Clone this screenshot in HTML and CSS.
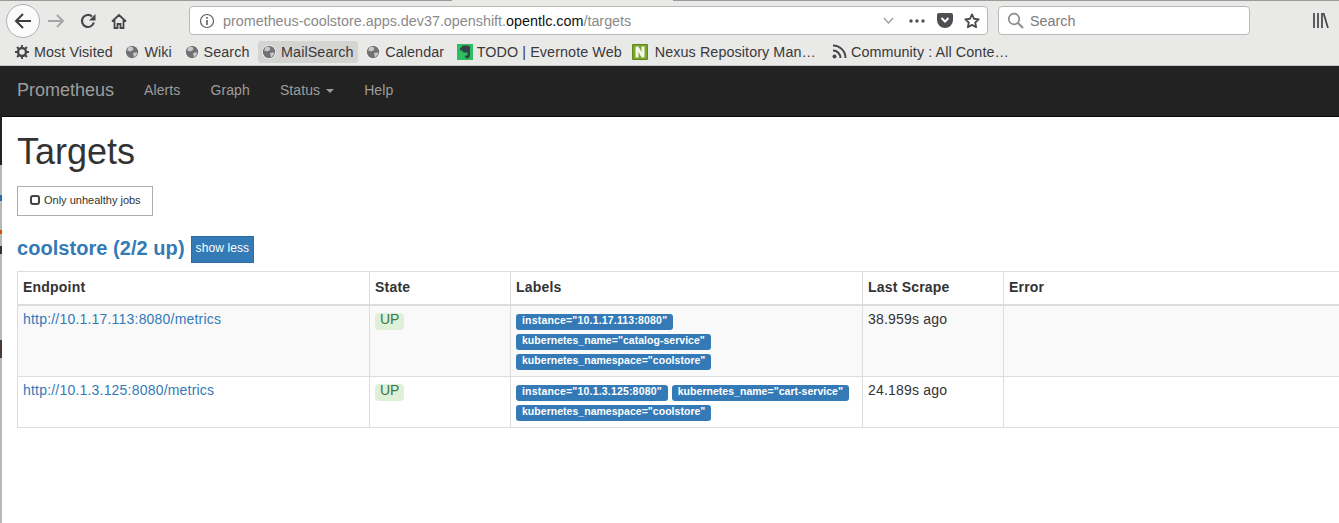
FILE: index.html
```html
<!DOCTYPE html>
<html>
<head>
    <meta charset="utf-8" />
    <title>Prometheus Time Series Collection and Processing Server</title>
    <link rel="stylesheet" href="styles.css">
</head>
<body>
    <div class="strip"></div>
    <div class="window">
        <div class="chrome">
            <div class="topline">
                <span class="topline-left"></span>
                <span class="topline-tab"></span>
                <span class="topline-right"></span>
            </div>
            <div class="toolbar">
                <div class="back">
                    <svg width="18" height="18" viewBox="0 0 18 18"><path d="M17 9H2M9 2L2 9l7 7" fill="none" stroke="#3d3d3f" stroke-width="2"/></svg>
                </div>
                <svg class="nav-icon forward" width="18" height="18" viewBox="0 0 18 18"><path d="M1 9h15M10 3l6 6-6 6" fill="none" stroke="#a5a5a5" stroke-width="1.8"/></svg>
                <svg class="nav-icon reload" width="16" height="16" viewBox="0 0 16 16"><path d="M13.8 9.5A6 6 0 1 1 12 3.5" fill="none" stroke="#45454a" stroke-width="2.2"/><path d="M15.500 1v6.500H9z" fill="#45454a"/></svg>
                <svg class="nav-icon home" width="16" height="16" viewBox="0 0 16 16"><path d="M1 8.500L8 2l7 6.500M3.500 7v8h3v-4h3v4h3V7" fill="none" stroke="#45454a" stroke-width="1.800"/></svg>
                <div class="urlbar">
                    <svg class="info" width="16" height="16" viewBox="0 0 16 16"><circle cx="8" cy="8" r="6.500" fill="none" stroke="#5f5f63" stroke-width="1.200"/><path d="M8 7v5M8 4v1.800" stroke="#5f5f63" stroke-width="1.600"/></svg>
                    <span class="url">prometheus-coolstore.apps.dev37.openshift.<b>opentlc.com</b>/targets</span>
                    <svg class="url-chevron" width="11" height="8" viewBox="0 0 11 8"><path d="M1 1l4.500 5L10 1" fill="none" stroke="#9a9a9c" stroke-width="1.200"/></svg>
                    <svg class="dots" width="16" height="4" viewBox="0 0 16 4"><circle cx="2" cy="2" r="1.700" fill="#4f4f53"/><circle cx="8" cy="2" r="1.700" fill="#4f4f53"/><circle cx="14" cy="2" r="1.700" fill="#4f4f53"/></svg>
                    <svg class="pocket" width="16" height="15" viewBox="0 0 16 15"><path d="M2 0h12a2 2 0 0 1 2 2v5a8 8 0 0 1-16 0V2a2 2 0 0 1 2-2z" fill="#4f4f53"/><path d="M4.500 5L8 8.500 11.500 5" fill="none" stroke="#fff" stroke-width="2"/></svg>
                    <svg class="star" width="16" height="16" viewBox="0 0 17 17"><path d="M8.500 1.500l2.100 4.600 5 .6-3.700 3.400 1 5-4.400-2.500-4.400 2.500 1-5L1.400 6.700l5-.6z" fill="none" stroke="#4a4a4e" stroke-width="1.900" stroke-linejoin="round"/></svg>
                </div>
                <div class="searchbar">
                    <svg width="17" height="17" viewBox="0 0 17 17"><circle cx="7" cy="7" r="5.300" fill="none" stroke="#8b8b8d" stroke-width="1.700"/><path d="M11 11l5 5" stroke="#8b8b8d" stroke-width="2"/></svg>
                    <span>Search</span>
                </div>
                <svg class="library" width="16" height="15" viewBox="0 0 16 15"><path d="M1 0v15M5 0v15M9 0v15M10.500 0l4.500 15" fill="none" stroke="#45454a" stroke-width="1.700"/></svg>
            </div>
            <div class="bookmarks">
                <div class="bookmark">
                    <svg width="14" height="14" viewBox="0 0 14 14"><circle cx="7" cy="7" r="4" fill="none" stroke="#45454a" stroke-width="2.400"/><path d="M7 0v3M7 11v3M0 7h3M11 7h3M2 2l2 2M10 10l2 2M12 2l-2 2M4 10l-2 2" stroke="#45454a" stroke-width="1.800"/></svg>
                    Most Visited
                </div>
                <div class="bookmark">
                    <svg class="globe" width="14" height="14" viewBox="0 0 14 14"><circle cx="7" cy="7" r="7" fill="#f6f6f6"/><circle cx="7" cy="7" r="6.200" fill="#727276"/><path d="M4 1.500l3.500.5 1 2.500-3 2-3.500-1zM8 8l3.500-.8.800 1.800L9 12.500z" fill="#c9c9c9"/></svg>
                    Wiki
                </div>
                <div class="bookmark">
                    <svg class="globe" width="14" height="14" viewBox="0 0 14 14"><circle cx="7" cy="7" r="7" fill="#f6f6f6"/><circle cx="7" cy="7" r="6.200" fill="#727276"/><path d="M4 1.500l3.500.5 1 2.500-3 2-3.500-1zM8 8l3.500-.8.800 1.800L9 12.500z" fill="#c9c9c9"/></svg>
                    Search
                </div>
                <div class="bookmark active">
                    <svg class="globe" width="14" height="14" viewBox="0 0 14 14"><circle cx="7" cy="7" r="7" fill="#f6f6f6"/><circle cx="7" cy="7" r="6.200" fill="#727276"/><path d="M4 1.500l3.500.5 1 2.500-3 2-3.500-1zM8 8l3.500-.8.800 1.800L9 12.500z" fill="#c9c9c9"/></svg>
                    MailSearch
                </div>
                <div class="bookmark">
                    <svg class="globe" width="14" height="14" viewBox="0 0 14 14"><circle cx="7" cy="7" r="7" fill="#f6f6f6"/><circle cx="7" cy="7" r="6.200" fill="#727276"/><path d="M4 1.500l3.500.5 1 2.500-3 2-3.500-1zM8 8l3.500-.8.800 1.800L9 12.500z" fill="#c9c9c9"/></svg>
                    Calendar
                </div>
                <div class="bookmark evernote">
                    <svg width="16" height="16" viewBox="0 0 16 16"><rect width="16" height="16" fill="#2dbe60"/><path d="M3 4.500L6 1.500h5c1.500 0 2 1 2 2.500v7.500c0 1.500-1 3-2.800 3S7.500 13 8 11.500h2.500V8.500H7C6 8.500 5.500 7.500 5.500 6.500H3z" fill="#34424a"/></svg>
                    TODO | Evernote Web
                </div>
                <div class="bookmark nexus">
                    <svg width="16" height="16" viewBox="0 0 16 16"><rect width="16" height="16" rx="1" fill="#5d8a1e"/><rect x="1" y="1" width="14" height="14" fill="#7aa62c"/><path d="M3.500 13.500V2.500h3l3 5.500V2.500h3v11h-3l-3-5.500v5.500z" fill="#f4f7ea"/></svg>
                    Nexus Repository Man…
                </div>
                <div class="bookmark rss">
                    <svg width="15" height="15" viewBox="0 0 15 15"><circle cx="2.500" cy="12.500" r="2" fill="#45454a"/><path d="M1 6.500a7.500 7.500 0 0 1 7.500 7.500M1 1.500A12.500 12.500 0 0 1 13.500 14" fill="none" stroke="#45454a" stroke-width="2"/></svg>
                    Community : All Conte…
                </div>
            </div>
        </div>
        <nav class="navbar">
            <a class="brand">Prometheus</a>
            <a>Alerts</a>
            <a>Graph</a>
            <a>Status <span class="caret"></span></a>
            <a>Help</a>
        </nav>
        <div class="container">
            <h1>Targets</h1>
            <div class="unhealthy"><span class="checkbox"></span>Only unhealthy jobs</div>
            <div class="job">
                <h2>coolstore (2/2 up)</h2>
                <div class="show-less">show less</div>
            </div>
            <table>
                <thead>
                    <tr>
                        <th class="col-endpoint">Endpoint</th>
                        <th class="col-state">State</th>
                        <th class="col-labels">Labels</th>
                        <th class="col-scrape">Last Scrape</th>
                        <th>Error</th>
                    </tr>
                </thead>
                <tbody>
                    <tr class="odd">
                        <td><a>http://10.1.17.113:8080/metrics</a></td>
                        <td><span class="up">UP</span></td>
                        <td class="labels">
                            <span class="label instance">instance="10.1.17.113:8080"</span>
                            <span class="label">kubernetes_name="catalog-service"</span>
                            <span class="label">kubernetes_namespace="coolstore"</span>
                        </td>
                        <td>38.959s ago</td>
                        <td></td>
                    </tr>
                    <tr>
                        <td><a>http://10.1.3.125:8080/metrics</a></td>
                        <td><span class="up">UP</span></td>
                        <td class="labels">
                            <span class="label instance">instance="10.1.3.125:8080"</span>
                            <span class="label">kubernetes_name="cart-service"</span>
                            <span class="label">kubernetes_namespace="coolstore"</span>
                        </td>
                        <td>24.189s ago</td>
                        <td></td>
                    </tr>
                </tbody>
            </table>
        </div>
    </div>
</body>
</html>
```
FILE: styles.css
```css
html, body {
    margin: 0;
    height: 100%;
    overflow: hidden;
}

body {
    display: flex;
    background-color: #fff;
    font-family: "Liberation Sans", Arial, sans-serif;
    font-size: 14px;
    line-height: 20px;
    color: #333;
}

/* bits of the window behind, down the left edge */
.strip {
    width: 2px;
    flex: none;
    background: linear-gradient(to bottom,
        #222 0, #222 165px,
        #b8b8b8 165px, #b8b8b8 195px,
        #2a6ab0 195px, #2a6ab0 201px,
        #b8b8b8 201px, #b8b8b8 230px,
        #d35400 230px, #d35400 234px,
        #b8b8b8 234px, #b8b8b8 246px,
        #333 246px, #333 254px,
        #b8b8b8 254px, #b8b8b8 340px,
        #4a3a35 340px, #4a3a35 358px,
        #b8b8b8 358px, #b8b8b8 100%);
}

.window {
    flex: 1;
    min-width: 0;
}

/* browser chrome */
.chrome {
    height: 66px;
    margin-left: -2px;
    background-color: #e9e9e7;
    box-sizing: border-box;
    border-bottom: 1px solid #c8c8c6;
}

.topline {
    display: flex;
    height: 1px;
    background-color: #9a9a9a;
}

.topline-left {
    width: 452px;
}

.topline-tab {
    width: 221px;
    background-color: #e9e9e7;
}

.toolbar {
    display: flex;
    align-items: center;
    height: 39px;
    padding-left: 6px;
}

.back {
    display: flex;
    align-items: center;
    justify-content: center;
    width: 32px;
    height: 32px;
    border: 1px solid #b0b0b0;
    border-radius: 50%;
    background-color: #fbfbfb;
}

.nav-icon {
    flex: none;
}

.forward {
    margin-left: 7px;
}

.reload {
    margin-left: 15px;
}

.home {
    margin-left: 15px;
}

.urlbar, .searchbar {
    display: flex;
    align-items: center;
    height: 29px;
    background-color: #fff;
    border: 1px solid #b9b9b7;
    border-radius: 4px;
    box-sizing: border-box;
    font-size: 14.350px;
}

.urlbar {
    width: 799px;
    margin-left: 62px;
    padding-left: 9px;
}

.url {
    margin-left: 8px;
    color: #8a8a8a;
    white-space: nowrap;
    flex: 1;
}

.url b {
    font-weight: normal;
    color: #111;
}

.url-chevron {
    margin-right: 15px;
}

.dots {
    margin-right: 12px;
}

.pocket {
    margin-right: 11px;
}

.star {
    margin-right: 7px;
}

.searchbar {
    width: 252px;
    margin-left: 10px;
    padding-left: 8px;
    color: #7b7b7b;
}

.searchbar span {
    margin-left: 6px;
}

.library {
    margin-left: 63px;
}

.bookmarks {
    display: flex;
    align-items: center;
    height: 23px;
    padding-left: 11px;
    font-size: 14.350px;
    letter-spacing: .08px;
    color: #3a3a3c;
}

.bookmark {
    display: flex;
    align-items: center;
    gap: 5px;
    height: 22px;
    padding: 0 4px;
    margin-right: 4.650px;
    white-space: nowrap;
}

.bookmark.evernote {
    gap: 4px;
    margin-right: 2px;
}

.bookmark.nexus {
    gap: 7px;
    margin-right: 8px;
}

.bookmark.rss {
    gap: 4px;
}

.bookmark.active {
    background-color: #d4d4d2;
    border-radius: 3px;
}

/* prometheus page */
.navbar {
    display: flex;
    align-items: center;
    height: 51px;
    padding-bottom: 2px;
    background-color: #222;
    border-bottom: 1px solid #080808;
    box-sizing: border-box;
    padding-left: 15px;
    color: #9d9d9d;
    letter-spacing: .1px;
}

.navbar a {
    margin-right: 30px;
}

.navbar .brand {
    font-size: 18px;
    letter-spacing: 0;
}

.caret {
    display: inline-block;
    width: 0;
    height: 0;
    margin-left: 2px;
    vertical-align: middle;
    border-top: 4px solid #9d9d9d;
    border-left: 4px solid transparent;
    border-right: 4px solid transparent;
}

.container {
    padding-left: 15px;
}

h1 {
    margin: 0;
    padding-top: 15px;
    font-size: 36px;
    font-weight: 500;
    line-height: 40px;
}

.unhealthy {
    display: flex;
    align-items: center;
    width: 136px;
    height: 30px;
    margin-top: 14px;
    box-sizing: border-box;
    border: 1px solid #adadad;
    padding-left: 12px;
    padding-bottom: 2px;
    font-size: 11px;
}

.checkbox {
    width: 10px;
    height: 10px;
    margin-right: 4px;
    box-sizing: border-box;
    border: 2px solid #444;
    border-radius: 3px;
}

.job {
    display: flex;
    align-items: flex-start;
    gap: 6px;
    margin-top: 20px;
    height: 27px;
}

h2 {
    margin: 0;
    font-size: 20px;
    font-weight: bold;
    line-height: 25px;
    letter-spacing: .05px;
    color: #337ab7;
}

.show-less {
    padding: 0 4px;
    height: 27px;
    line-height: 23px;
    box-sizing: border-box;
    background-color: #337ab7;
    border: 1px solid #2e6da4;
    color: #fff;
    font-size: 12px;
    letter-spacing: .1px;
}

table {
    width: 1340px;
    margin-top: 8px;
    table-layout: fixed;
    border-collapse: collapse;
    letter-spacing: .2px;
}

th, td {
    border: 1px solid #ddd;
    padding: 3px 5px;
    text-align: left;
    vertical-align: top;
}

th {
    padding-top: 5px;
    border-bottom-width: 2px;
    height: 33px;
    box-sizing: border-box;
}

.col-endpoint {
    width: 352px;
}

.col-state {
    width: 141px;
}

.col-labels {
    width: 352px;
}

.col-scrape {
    width: 141px;
}

tr.odd td {
    background-color: #f9f9f9;
}

td a {
    color: #337ab7;
}

.up {
    display: inline-block;
    margin-top: 4px;
    padding: 0 5px;
    line-height: 12px;
    height: 17px;
    vertical-align: top;
    background-color: #dff0d8;
    border-radius: 4px;
    color: #3c763d;
    letter-spacing: 0;
}

td.labels {
    padding-top: 8px;
    padding-bottom: 2px;
    letter-spacing: 0;
}

.label {
    display: inline-block;
    height: 16px;
    margin: 0 0 4px 0;
    padding: 0 6px;
    background-color: #337ab7;
    border-radius: 3px;
    color: #fff;
    font-size: 10.500px;
    font-weight: bold;
    line-height: 13px;
    letter-spacing: .03px;
    white-space: nowrap;
    vertical-align: top;
}

.label.instance {
    letter-spacing: .18px;
}
```
